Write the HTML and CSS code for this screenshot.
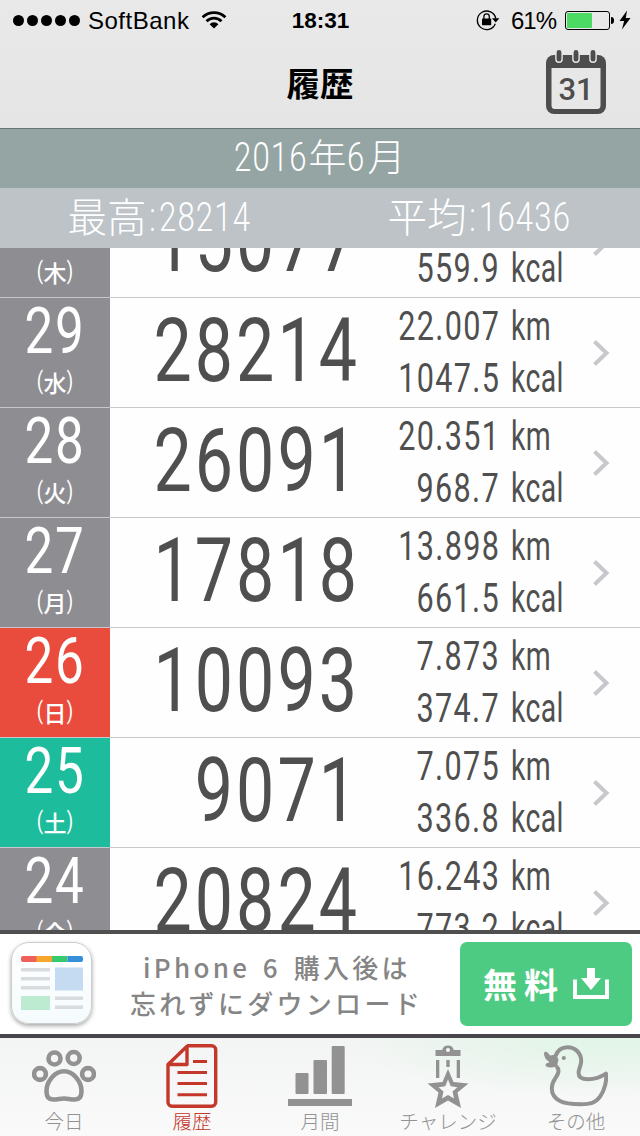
FILE: index.html
```html
<!DOCTYPE html>
<html lang="ja">
<head>
    <meta charset="UTF-8">
    <meta name="viewport" content="width=device-width, initial-scale=1.0">
    <title>履歴</title>
    <link rel="stylesheet" href="styles.css">
</head>
<body>
    <header>
        <div class="status">
            <div class="status-left">
                <div class="signal"><i></i><i></i><i></i><i></i><i></i></div>
                <span class="carrier">SoftBank</span>
                <svg class="wifi" width="26" height="19" viewBox="0 0 26 19">
                    <g fill="none" stroke="#000" stroke-width="2.7">
                        <path d="M1.6 7.3a16.2 16.2 0 0 1 22.8 0"/>
                        <path d="M5.5 11.3a10.6 10.6 0 0 1 15 0"/>
                    </g>
                    <path d="M13 18.6l-4.4-4.4a6.2 6.2 0 0 1 8.8 0z"/>
                </svg>
            </div>
            <div class="clock">18:31</div>
            <div class="status-right">
                <svg width="24" height="22" viewBox="0 0 24 22">
                    <path d="M19.3 14.8A9.3 9.3 0 1 1 19.8 9.6" fill="none" stroke="#000" stroke-width="1.3"/>
                    <path d="M16 9.2h7.4l-3.7 4.2z"/>
                    <rect x="6" y="9.6" width="9.2" height="6.6" rx=".6"/>
                    <path d="M7.9 10V7.6a2.7 2.7 0 0 1 5.4 0V10" fill="none" stroke="#000" stroke-width="1.3"/>
                </svg>
                <span class="percent">61%</span>
                <div class="battery"><div class="charge" style="width: 61%"></div></div>
                <div class="cap"></div>
                <svg class="bolt" width="12" height="20" viewBox="0 0 12 20">
                    <path d="M8 .5L.5 11h4.600L3 19.500 11.500 8H6.800z"/>
                </svg>
            </div>
        </div>
        <div class="nav">
            <h1>履歴</h1>
            <div class="calendar">
                <svg width="60" height="64" viewBox="0 0 60 64">
                    <path d="M8 5h44a8 8 0 0 1 8 8v43a8 8 0 0 1-8 8H8a8 8 0 0 1-8-8V13a8 8 0 0 1 8-8z" fill="#4d4d4d"/>
                    <path d="M5.500 18h49v37.500a3.500 3.500 0 0 1-3.500 3.500H9a3.500 3.500 0 0 1-3.500-3.500z" fill="#e7e7e7"/>
                    <g stroke="#e7e7e7" stroke-width="7.600" stroke-linecap="round">
                        <path d="M13 3v6.300M30 3v6.300M47 3v6.300"/>
                    </g>
                    <g stroke="#4d4d4d" stroke-width="4.800" stroke-linecap="round">
                        <path d="M13 2.400v6.800M30 2.400v6.800M47 2.400v6.800"/>
                    </g>
                    <text x="30" y="50" text-anchor="middle">31</text>
                </svg>
            </div>
        </div>
    </header>

    <div class="month"><b class="w4">2016</b>年<b class="w1">6</b>月</div>
    <div class="summary">
        <div>最高<b class="colon">:</b><b class="w5">28214</b></div>
        <div>平均<b class="colon">:</b><b class="w5">16436</b></div>
    </div>

    <div class="list">
        <div class="row">
            <div class="day"><span class="date"></span><span class="week"><i>(</i>木<i>)</i></span></div>
            <div class="steps"><span>15077</span></div>
            <div class="values"><p></p><p class="unit"></p><p><span>559.9</span></p><p class="unit"><span>kcal</span></p></div>
            <svg class="arrow" width="18" height="26" viewBox="0 0 18 26"><path d="M1.500 1.500L13.500 13 1.500 24.500"/></svg>
        </div>
        <div class="row">
            <div class="day"><span class="date">29</span><span class="week"><i>(</i>水<i>)</i></span></div>
            <div class="steps"><span>28214</span></div>
            <div class="values"><p><span>22.007</span></p><p class="unit"><span>km</span></p><p><span>1047.5</span></p><p class="unit"><span>kcal</span></p></div>
            <svg class="arrow" width="18" height="26" viewBox="0 0 18 26"><path d="M1.500 1.500L13.500 13 1.500 24.500"/></svg>
        </div>
        <div class="row">
            <div class="day"><span class="date">28</span><span class="week"><i>(</i>火<i>)</i></span></div>
            <div class="steps"><span>26091</span></div>
            <div class="values"><p><span>20.351</span></p><p class="unit"><span>km</span></p><p><span>968.7</span></p><p class="unit"><span>kcal</span></p></div>
            <svg class="arrow" width="18" height="26" viewBox="0 0 18 26"><path d="M1.500 1.500L13.500 13 1.500 24.500"/></svg>
        </div>
        <div class="row">
            <div class="day"><span class="date">27</span><span class="week"><i>(</i>月<i>)</i></span></div>
            <div class="steps"><span>17818</span></div>
            <div class="values"><p><span>13.898</span></p><p class="unit"><span>km</span></p><p><span>661.5</span></p><p class="unit"><span>kcal</span></p></div>
            <svg class="arrow" width="18" height="26" viewBox="0 0 18 26"><path d="M1.500 1.500L13.500 13 1.500 24.500"/></svg>
        </div>
        <div class="row">
            <div class="day sunday"><span class="date">26</span><span class="week"><i>(</i>日<i>)</i></span></div>
            <div class="steps"><span>10093</span></div>
            <div class="values"><p><span>7.873</span></p><p class="unit"><span>km</span></p><p><span>374.7</span></p><p class="unit"><span>kcal</span></p></div>
            <svg class="arrow" width="18" height="26" viewBox="0 0 18 26"><path d="M1.500 1.500L13.500 13 1.500 24.500"/></svg>
        </div>
        <div class="row">
            <div class="day saturday"><span class="date">25</span><span class="week"><i>(</i>土<i>)</i></span></div>
            <div class="steps"><span>9071</span></div>
            <div class="values"><p><span>7.075</span></p><p class="unit"><span>km</span></p><p><span>336.8</span></p><p class="unit"><span>kcal</span></p></div>
            <svg class="arrow" width="18" height="26" viewBox="0 0 18 26"><path d="M1.500 1.500L13.500 13 1.500 24.500"/></svg>
        </div>
        <div class="row">
            <div class="day"><span class="date">24</span><span class="week"><i>(</i>金<i>)</i></span></div>
            <div class="steps"><span>20824</span></div>
            <div class="values"><p><span>16.243</span></p><p class="unit"><span>km</span></p><p><span>773.2</span></p><p class="unit"><span>kcal</span></p></div>
            <svg class="arrow" width="18" height="26" viewBox="0 0 18 26"><path d="M1.500 1.500L13.500 13 1.500 24.500"/></svg>
        </div>
    </div>

    <div class="ad">
        <div class="app-icon">
            <svg width="62" height="54" viewBox="0 0 62 54">
                <path d="M2 0h14v6H2a2 2 0 0 1-2-2V2a2 2 0 0 1 2-2z" fill="#f0605a"/>
                <path d="M15.500 0H31v6H15.500z" fill="#f7a52c"/>
                <path d="M31 0h15.500v6H31z" fill="#36c96f"/>
                <path d="M46.500 0H60a2 2 0 0 1 2 2v2a2 2 0 0 1-2 2H46.500z" fill="#3490d8"/>
                <path d="M0 12h29v3.500H0zM0 21h29v3.500H0zM0 30h29v3.500H0zM34 40.500h28V44H34zM34 49.500h28V53H34z" fill="#d9dcdf"/>
                <path d="M34 11.500h28v23H34z" fill="#c5dbf2"/>
                <path d="M0 40h29v14H0z" fill="#bdebd1"/>
            </svg>
        </div>
        <div class="ad-text">
            <div class="ad-first">iPhone 6 購入後は</div>
            <div class="ad-second">忘れずにダウンロード</div>
        </div>
        <div class="free">
            <span>無料</span>
            <svg width="36" height="32" viewBox="0 0 36 32">
                <path d="M2 11.500V29h32V11.500" fill="none" stroke="#fff" stroke-width="4"/>
                <path d="M14 0h8v10h6l-10 12L8 10h6z" fill="#fff"/>
            </svg>
        </div>
    </div>

    <nav class="tabs">
        <div class="tab">
            <svg width="64" height="64" viewBox="0 0 64 64" fill="none" stroke="#929292" stroke-width="4.600">
                <circle cx="8" cy="30" r="5.900"/>
                <circle cx="22.500" cy="14.500" r="6"/>
                <circle cx="41.700" cy="14" r="6"/>
                <circle cx="56" cy="30" r="5.900"/>
                <path d="M32 27.300C23 27.300 14.500 37 14.500 47c0 6 2 8.500 6.500 8.500 5 0 7-1 11-1s6 1 11 1c4.500 0 6.500-2.500 6.500-8.500C49.500 37 41 27.300 32 27.300z"/>
            </svg>
            <span>今日</span>
        </div>
        <div class="tab active">
            <svg width="64" height="64" viewBox="0 0 64 64" fill="none" stroke="#c4372b" stroke-width="3.400" stroke-linejoin="round">
                <path d="M27 1.800h24.700a4 4 0 0 1 4 4v52.400a4 4 0 0 1-4 4H12a4 4 0 0 1-4-4V20.500L27 2.200v18.300H8"/>
                <path d="M33 17.500h14M17.500 28.500H47M17.500 39.500H47M17.500 50.700H47" stroke-width="3"/>
            </svg>
            <span>履歴</span>
        </div>
        <div class="tab">
            <svg width="64" height="64" viewBox="0 0 64 64" fill="#929292">
                <rect x="7.500" y="29" width="13" height="21" rx="1"/>
                <rect x="25.500" y="16" width="13.500" height="34" rx="1"/>
                <rect x="43.700" y="2" width="13" height="48" rx="1"/>
                <path d="M0 55h64v7H0z"/>
            </svg>
            <span>月間</span>
        </div>
        <div class="tab">
            <svg width="64" height="64" viewBox="0 0 64 64" fill="#929292">
                <path d="M19.500 6h6.700a6 6 0 0 1 11.600 0h6.700v6h-25z"/>
                <circle cx="32" cy="6" r="2" fill="#f4f7f5"/>
                <path d="M20 16h3.300v18H20zM30.300 16h3.400v7h-3.400zM40.700 16H44v18h-3.300z"/>
                <path fill-rule="evenodd" d="M32 25l5.500 13 15 1.500-11 9L45 64l-13-7.500L19 64l3.500-15.500-11-9 15-1.500zM32 35.500l-2.700 6.800-6.800.9 5 4.300L26 54.500l6-3.500 6 3.500-1.500-7 5-4.300-6.800-.9z"/>
            </svg>
            <span>チャレンジ</span>
        </div>
        <div class="tab">
            <svg width="64" height="64" viewBox="0 0 64 64" fill="none" stroke="#929292" stroke-width="4" stroke-linejoin="round">
                <path d="M11.500 12C13.500 6.500 18 3.300 23.500 3.300c8 0 13.700 6 13.700 13.700 0 5-2.600 7.300-2.600 11.700 0 5 4.400 6.600 9.400 6.600 8 0 13-2.300 18-5.600 1 7-1.500 17-6 23-4.500 6.500-10 7.500-19 7.500-8 0-16-.5-21.500-3.500-5.500-3-7.700-7-7.700-12.500 0-9 6.700-11 6.700-17.500 0-2-.8-3.200-2.300-4.500"/>
                <path d="M0 9.500C0 7.500 2.500 7 4 9l2 2.500 6-1 2.500 5L13 22c-2 1.700-7.500 2-10.500.5C.8 21.500 1.500 19 4 19l1.500-1C2.500 16.500 0 13 0 9.500z" fill="#929292" stroke="none"/>
                <circle cx="19.800" cy="14" r="2.100" fill="#929292" stroke="none"/>
            </svg>
            <span>その他</span>
        </div>
    </nav>
</body>
</html>
```

FILE: styles.css
```css
*{
    margin: 0;
    padding: 0;
    box-sizing: border-box;
}
body{
    width: 640px;
    height: 1136px;
    overflow: hidden;
    display: flex;
    flex-direction: column;
    background-color: #fefefe;
    font-family: "Noto Sans CJK JP", sans-serif;
}
i, b{
    font-style: normal;
    font-weight: normal;
}
svg{
    display: block;
    flex-shrink: 0;
}

header{
    height: 129px;
    flex-shrink: 0;
    background: linear-gradient(to bottom, #e9e9e9, #e5e5e5);
    border-bottom: 1px solid #687776;
}
.status{
    height: 40px;
    display: grid;
    grid-template-columns: 1fr 80px 1fr;
    align-items: center;
    font: 24px/28px "Liberation Sans", sans-serif;
}
.status-left{
    display: flex;
    align-items: center;
    padding-left: 13px;
}
.signal{
    display: flex;
    gap: 3px;
}
.signal i{
    width: 11px;
    height: 11px;
    border-radius: 50%;
    background-color: #000;
}
.carrier{
    margin-left: 8px;
    padding-top: 2px;
    letter-spacing: 0.5px;
}
.wifi{
    margin: -2px 0 0 12px;
}
.clock{
    padding: 2px 0 0 1px;
    text-align: center;
    font-weight: bold;
    font-size: 22.5px;
}
.status-right{
    display: flex;
    align-items: center;
    justify-content: flex-end;
    padding-right: 9px;
}
.percent{
    margin: 0 9px 0 11px;
    padding-top: 2px;
    letter-spacing: -1px;
}
.battery{
    width: 45px;
    height: 19px;
    padding: 1px;
    border: 1px solid #000;
    border-radius: 3px;
}
.charge{
    height: 100%;
    background-color: #4cd964;
    border-radius: 1px;
}
.cap{
    width: 3px;
    height: 7px;
    margin-left: 1px;
    background-color: #000;
    border-radius: 0 3px 3px 0;
}
.bolt{
    margin-left: 5px;
}
.nav{
    height: 88px;
    display: grid;
    grid-template-columns: 1fr 120px 1fr;
}
h1{
    grid-column: 2;
    text-align: center;
    font-size: 33.5px;
    line-height: 84px;
    font-weight: 700;
}
.calendar{
    justify-self: end;
    padding: 10px 34px 0 0;
}
.calendar text{
    font: 500 31px Roboto, sans-serif;
    fill: #4d4d4d;
}

.month, .summary{
    color: #fff;
    font-size: 39.5px;
    font-weight: 300;
    line-height: 54px;
}
.month{
    height: 59px;
    flex-shrink: 0;
    display: flex;
    justify-content: center;
    font-size: 38px;
    line-height: 51px;
    background-color: #95a5a4;
}
.summary{
    height: 60px;
    flex-shrink: 0;
    display: grid;
    grid-template-columns: 1fr 1fr;
    background-color: #bdc3c7;
}
.summary div{
    display: flex;
    justify-content: center;
}
.month b, .summary b{
    display: block;
    font: 300 41px/57px Roboto, sans-serif;
    letter-spacing: 1.5px;
    transform: scaleX(0.76);
    transform-origin: left;
}
.summary b{
    line-height: 59px;
}
.w4{
    width: 74px;
}
.w1{
    width: 21px;
}
.colon{
    width: 12px;
    padding-left: 3px;
}
.w5{
    width: 94px;
}

/* the list is scrolled by 60px */
.list{
    height: 682px;
    flex-shrink: 0;
    overflow: hidden;
}
.list .row:first-child{
    margin-top: -60px;
}
.row{
    height: 110px;
    display: flex;
    border-bottom: 1px solid #c8c7cc;
    color: #4f4f4f;
    font-family: Roboto, sans-serif;
}
.day{
    width: 110px;
    display: flex;
    flex-direction: column;
    align-items: center;
    background-color: #8e8d92;
    color: #fff;
}
.sunday{
    background-color: #e94c3d;
}
.saturday{
    background-color: #1dbc9c;
}
.date{
    height: 66px;
    font-size: 64px;
    line-height: 67px;
    letter-spacing: 2px;
    transform: scaleX(0.8);
}
.week{
    display: flex;
    font: 500 23px/36px "Noto Sans CJK JP", sans-serif;
}
.week i{
    font: 400 23px/36px Roboto, sans-serif;
    transform: scaleX(0.8);
}
.steps{
    width: 250px;
    display: flex;
    justify-content: flex-end;
    font-size: 89px;
    line-height: 105px;
    letter-spacing: 4px;
}
.steps span{
    transform: scaleX(0.765);
    transform-origin: right;
}
.values{
    width: 221px;
    display: grid;
    grid-template-columns: 140px 1fr;
    grid-template-rows: 52px 52px;
    column-gap: 11px;
    padding-top: 2px;
    font-size: 40px;
    line-height: 54px;
    letter-spacing: 1.7px;
}
.values p{
    display: flex;
    justify-content: flex-end;
}
.values span{
    transform: scaleX(0.765);
    transform-origin: right;
}
.values .unit{
    justify-content: flex-start;
    letter-spacing: 0.5px;
}
.values .unit span{
    transform: scaleX(0.71);
    transform-origin: left;
}
.arrow{
    margin: 42px 0 0 12px;
}
.arrow path{
    fill: none;
    stroke: #c7c7cc;
    stroke-width: 4;
}

.ad{
    height: 108px;
    flex-shrink: 0;
    display: flex;
    padding: 8px 8px 0 11px;
    border-top: 4px solid #4f4f4f;
    border-bottom: 4px solid #48464a;
    background-color: #fff;
}
.app-icon{
    width: 81px;
    height: 82px;
    padding: 13px 0 0 9px;
    border: 1px solid #ccc;
    border-radius: 18px;
    background: linear-gradient(to bottom, #fff, #f5fbfd);
    box-shadow: 0 2px 4px rgba(0, 0, 0, 0.35);
}
.ad-text{
    width: 368px;
    padding: 7px 0 0 38px;
    color: #858585;
    font-size: 26px;
    font-weight: 500;
    line-height: 36px;
    letter-spacing: 3.3px;
    word-spacing: 3.5px;
    white-space: nowrap;
}
.ad-first{
    padding-left: 13px;
}
.free{
    width: 172px;
    height: 84px;
    flex-shrink: 0;
    display: flex;
    align-items: center;
    padding-left: 23px;
    gap: 8px;
    border-radius: 7px;
    background-color: #4ecb82;
    color: #fff;
    font-size: 34px;
    font-weight: 700;
    letter-spacing: 7px;
}
.free span{
    margin-top: -2px;
}

.tabs{
    flex: 1;
    display: grid;
    grid-template-columns: repeat(5, 1fr);
    background: radial-gradient(ellipse 260px 60px at 600px 0, #e0f5e6, rgba(240, 248, 243, 0)), linear-gradient(to bottom, #f3f4f4, #fafafa);
}
.tab{
    display: flex;
    flex-direction: column;
    align-items: center;
    padding-top: 6px;
    color: #929292;
    font-size: 19.5px;
    font-weight: 300;
    line-height: 25px;
}
.active{
    color: #c4372b;
}
```
